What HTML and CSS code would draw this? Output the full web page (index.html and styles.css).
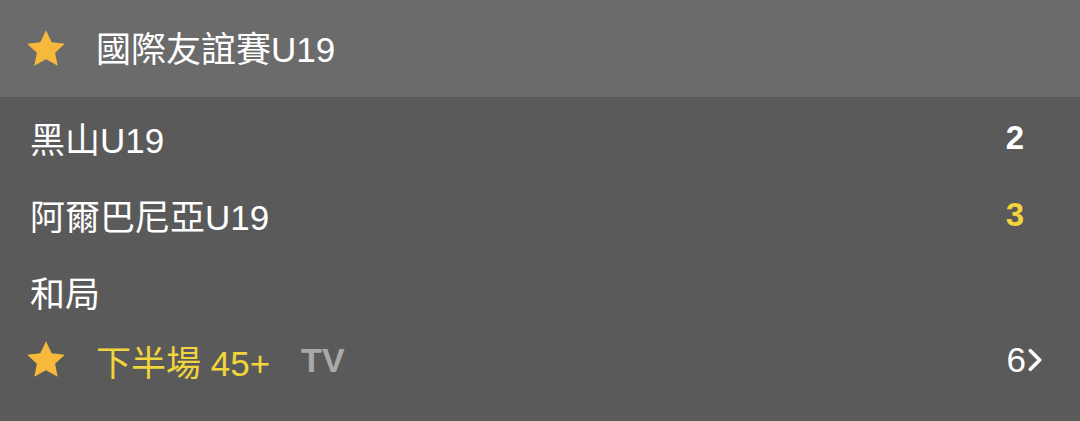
FILE: index.html
```html
<!DOCTYPE html>
<html lang="zh-Hant">
<head>
    <meta charset="UTF-8">
    <meta name="viewport" content="width=device-width, initial-scale=1.0">
    <title>國際友誼賽U19</title>
    <link rel="stylesheet" href="styles.css">
</head>
<body>
    <div class="card">
        <div class="league">
            <svg class="star" viewBox="0 0 24 24"><path d="M12 2.2l2.95 6.3 6.85.8-5.05 4.7 1.35 6.8L12 17.4l-6.1 3.4 1.35-6.8L2.2 9.3l6.85-.8z"/></svg>
            <span class="league-name">國際友誼賽U19</span>
        </div>

        <div class="match">
            <div class="row">
                <span class="team">黑山U19</span>
                <span class="score">2</span>
            </div>
            <div class="row">
                <span class="team">阿爾巴尼亞U19</span>
                <span class="score lead">3</span>
            </div>
            <div class="row">
                <span class="team">和局</span>
            </div>
            <div class="row status">
                <div class="status-left">
                    <svg class="star" viewBox="0 0 24 24"><path d="M12 2.2l2.95 6.3 6.85.8-5.05 4.7 1.35 6.8L12 17.4l-6.1 3.4 1.35-6.8L2.2 9.3l6.85-.8z"/></svg>
                    <span class="period">下半場 45+</span>
                    <span class="tv">TV</span>
                </div>
                <span class="more">6<svg class="chev" viewBox="0 0 12 20"><path d="M2 2l8 8-8 8"/></svg></span>
            </div>
        </div>
    </div>
</body>
</html>
```

FILE: styles.css
```css
body {
    margin: 0;
    padding: 0;
    background: #5a5a5a;
    font-family: 'Liberation Sans', 'Noto Sans CJK TC', sans-serif;
    color: #ffffff;
}

.card {
    width: 1080px;
    height: 421px;
    background: #5a5a5a;
}

.league {
    display: flex;
    align-items: center;
    height: 97px;
    padding-left: 23px;
    background: #6b6b6b;
    box-sizing: border-box;
}

.star {
    width: 46px;
    height: 46px;
    fill: #f6b93b;
    flex-shrink: 0;
}

.league-name {
    margin-left: 27px;
    font-size: 35px;
    margin-top: -4px;
}

.match {
    padding: 2px 55px 0 30px;
}

.row {
    display: flex;
    align-items: center;
    justify-content: space-between;
    height: 77px;
    font-size: 35px;
}

.score {
    font-weight: bold;
    font-size: 33px;
    width: 20px;
    text-align: center;
}

.score.lead {
    color: #f2d43c;
}

.status {
    height: 60px;
    margin-left: -7px;
    margin-right: -23px;
}

.status-left {
    display: flex;
    align-items: center;
}

.period {
    margin-left: 27px;
    color: #f2d43c;
    font-size: 35px;
}

.tv {
    margin-left: 31px;
    color: #a9a9a9;
    font-weight: bold;
    font-size: 34px;
}

.more {
    display: flex;
    align-items: center;
    font-size: 35px;
    margin-right: 6px;
}

.chev {
    width: 14px;
    height: 24px;
    margin-left: 2px;
    fill: none;
    stroke: #ffffff;
    stroke-width: 3;
    stroke-linecap: round;
    stroke-linejoin: round;
}
```
